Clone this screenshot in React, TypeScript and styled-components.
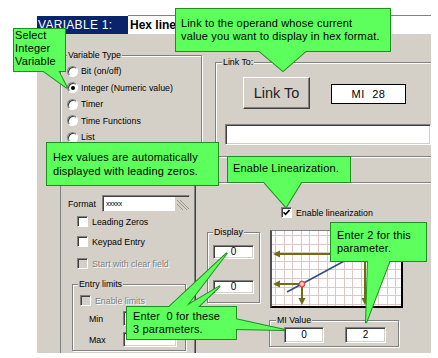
import React from 'react'
import styled, { createGlobalStyle } from 'styled-components'

const GRAY = '#d4d0c8'
const GREEN = '#5cff5c'
const GREEN_EDGE = '#1f8f1f'
const OLIVE = '#746a12'

const GlobalStyle = createGlobalStyle`
  html, body {
    margin: 0;
    padding: 0;
    background: #fff;
  }
  body {
    font-family: 'Liberation Sans', Arial, sans-serif;
  }
`

type Pt = [number, number]

interface CalloutProps {
  x: number
  y: number
  w: number
  h: number
  pad: string
  lineHeight: number
  pointers?: Pt[][]
  children: React.ReactNode
}

const Callout: React.FC<CalloutProps> = ({ x, y, w, h, pad, lineHeight, pointers = [], children }) => {
  const shapes = (
    <>
      <rect x={1} y={1} width={w - 2} height={h - 2} />
      {pointers.map((p, i) => (
        <polygon key={i} points={p.map((q) => q.join(',')).join(' ')} />
      ))}
    </>
  )
  return (
    <CalloutBox style={{ left: x, top: y, width: w, height: h }}>
      <CalloutShape width={w} height={h}>
        <g fill={GREEN_EDGE} stroke={GREEN_EDGE} strokeWidth={2} strokeLinejoin="miter">
          {shapes}
        </g>
        <g fill={GREEN} stroke="none">
          {shapes}
        </g>
      </CalloutShape>
      <CalloutText style={{ padding: pad, lineHeight: `${lineHeight}px` }}>{children}</CalloutText>
    </CalloutBox>
  )
}

const Radio: React.FC<{ checked?: boolean; label: string }> = ({ checked, label }) => (
  <OptionRow>
    <RadioCircle>{checked && <RadioDot />}</RadioCircle>
    <OptionLabel>{label}</OptionLabel>
  </OptionRow>
)

const Check: React.FC<{ checked?: boolean; disabled?: boolean; label: string; mt: number; ml: number }> = ({
  checked,
  disabled,
  label,
  mt,
  ml,
}) => (
  <CheckRow $mt={mt} $ml={ml}>
    <CheckBox $disabled={disabled}>
      {checked && (
        <svg width="7" height="7" viewBox="0 0 7 7">
          <path d="M0.5 3.2 L2.6 5.4 L6.5 1" fill="none" stroke="#000" strokeWidth="1.6" />
        </svg>
      )}
    </CheckBox>
    <OptionLabel $disabled={disabled}>{label}</OptionLabel>
  </CheckRow>
)

const GraphDrawing: React.FC = () => {
  const vs = Array.from({ length: 16 }, (_, i) => 3 + i * 8.6)
  const hs = Array.from({ length: 9 }, (_, i) => 4 + i * 8.6)
  return (
    <svg width="129" height="75" viewBox="0 0 129 75">
      <g stroke="#dcc6c6" strokeWidth="1">
        {vs.map((x) => (
          <line key={'v' + x} x1={Math.round(x) + 0.5} y1={0} x2={Math.round(x) + 0.5} y2={75} />
        ))}
        {hs.map((y) => (
          <line key={'h' + y} x1={0} y1={Math.round(y) + 0.5} x2={129} y2={Math.round(y) + 0.5} />
        ))}
      </g>
      <g stroke={OLIVE} strokeWidth="2" fill="none">
        <line x1={6} y1={23} x2={94} y2={23} />
        <line x1={93} y1={23} x2={93} y2={68} />
        <line x1={6} y1={53} x2={30} y2={53} />
        <line x1={30} y1={53} x2={30} y2={68} />
      </g>
      <g fill={OLIVE}>
        <polygon points="1,23 8,19.5 8,26.5" />
        <polygon points="1,53 8,49.5 8,56.5" />
        <polygon points="93,74 89.5,67 96.5,67" />
        <polygon points="30,74 26.5,67 33.5,67" />
      </g>
      <line x1={15} y1={61} x2={100} y2={15} stroke="#2f4f86" strokeWidth="1.6" />
      <circle cx={30} cy={53} r={3} fill="#ec7a7a" stroke="#d04848" strokeWidth="1" />
      <path d="M28 53 H32 M30 51 V55" stroke="#fff" strokeWidth="0.8" />
    </svg>
  )
}

const App: React.FC = () => {
  return (
    <Page>
      <GlobalStyle />
      <Window>
        <TitleRow>
          <TitleLabel>VARIABLE 1:</TitleLabel>
          <NameField>Hex linearization</NameField>
        </TitleRow>

        <Body>
          <LeftCol>
            <Group $w={142} $h={95} $mt={21}>
              <Legend $left={6}>Variable Type</Legend>
              <OptionList>
                <Radio label="Bit (on/off)" />
                <Radio checked label="Integer (Numeric value)" />
                <Radio label="Timer" />
                <Radio label="Time Functions" />
                <Radio label="List" />
              </OptionList>
            </Group>

            <LowerPanel>
              <FormatRow>
                <FieldLabel $w={34}>Format</FieldLabel>
                <FormatField>
                  <FormatText>xxxxx</FormatText>
                  <Grip width="14" height="14" viewBox="0 0 14 14">
                    <g stroke="#9a968e" strokeWidth="1">
                      <line x1="2" y1="3" x2="12" y2="13" />
                      <line x1="5" y1="3" x2="14" y2="12" />
                      <line x1="2" y1="7" x2="8" y2="13" />
                    </g>
                  </Grip>
                </FormatField>
              </FormatRow>
              <Check label="Leading Zeros" mt={4} ml={16} />
              <Check label="Keypad Entry" mt={9} ml={16} />
              <Check label="Start with clear field" disabled mt={11} ml={16} />

              <Group $w={114} $h={67} $mt={15} $ml={11}>
                <Legend $left={5}>Entry limits</Legend>
                <Check label="Enable limits" disabled mt={10} ml={7} />
                <LimitRow $mt={5}>
                  <FieldLabel $w={34}>Min</FieldLabel>
                  <Field $w={54} $h={15} />
                </LimitRow>
                <LimitRow $mt={6}>
                  <FieldLabel $w={34}>Max</FieldLabel>
                  <Field $w={54} $h={15} />
                </LimitRow>
              </Group>
            </LowerPanel>
          </LeftCol>

          <RightCol>
            <LinkGroup>
              <Legend $left={6}>Link To:</Legend>
              <LinkRow>
                <Button>Link To</Button>
                <OperandField>MI&nbsp;&nbsp;28</OperandField>
              </LinkRow>
              <WideField />
            </LinkGroup>

            <LinSection>
              <Check label="Enable linearization" checked mt={24} ml={76} />
              <BottomRow>
                <Group $w={53} $h={71} $mt={2} $ml={2}>
                  <Legend $left={5}>Display</Legend>
                  <Field $w={41} $h={14} $mt={12} $ml={5}>
                    0
                  </Field>
                  <Field $w={41} $h={14} $mt={21} $ml={5}>
                    0
                  </Field>
                </Group>
                <GraphCol>
                  <Graph>
                    <GraphDrawing />
                  </Graph>
                  <Group $w={130} $h={27} $mt={12} $ml={-1}>
                    <Legend $left={6}>MI Value</Legend>
                    <ValueRow>
                      <Field $w={40} $h={16}>
                        0
                      </Field>
                      <Field $w={41} $h={16} $ml={21}>
                        2
                      </Field>
                    </ValueRow>
                  </Group>
                </GraphCol>
              </BottomRow>
            </LinSection>
          </RightCol>
        </Body>
      </Window>

      <Callout x={13} y={28} w={53} h={44} pad="1px 0 0 2px" lineHeight={13} pointers={[[[29, 42], [45, 42], [54, 60]]]}>
        Select
        <br />
        Integer
        <br />
        Variable
      </Callout>

      <Callout
        x={175}
        y={8}
        w={216}
        h={44}
        pad="9px 0 0 6px"
        lineHeight={13}
        pointers={[[[83, 42], [132, 42], [108, 63]]]}
      >
        Link to the operand whose current
        <br />
        value you want to display in hex format.
      </Callout>

      <Callout x={46} y={142} w={173} h={44} pad="8px 0 0 7px" lineHeight={14}>
        Hex values are automatically
        <br />
        displayed with leading zeros.
      </Callout>

      <Callout x={227} y={156} w={124} h={27} pad="6px 0 0 6px" lineHeight={13} pointers={[[[36, 25], [75, 25], [59, 51]]]}>
        Enable Linearization.
      </Callout>

      <Callout
        x={330}
        y={222}
        w={97}
        h={40}
        pad="7px 0 0 7px"
        lineHeight={13}
        pointers={[[[38, 38], [60, 38], [36, 101]]]}
      >
        Enter 2 for this
        <br />
        parameter.
      </Callout>

      <Callout
        x={126}
        y={306}
        w={111}
        h={34}
        pad="4px 0 0 7px"
        lineHeight={13}
        pointers={[
          [[42, 2], [59, 2], [101, -53]],
          [[57, 2], [71, 2], [94, -20]],
          [[109, 13], [109, 23], [159, 24]],
        ]}
      >
        {'Enter  0 for these'}
        <br />3 parameters.
      </Callout>
    </Page>
  )
}

export default App

const Page = styled.div`
  position: relative;
  width: 438px;
  height: 358px;
  overflow: hidden;
  background: #fff;
  font-family: 'Liberation Sans', Arial, sans-serif;
  color: #000;
`

const Window = styled.div`
  margin-left: 37px;
  padding-top: 15px;
  width: 394px;
`

const TitleRow = styled.div`
  display: flex;
  height: 19px;
`

const TitleLabel = styled.div`
  box-sizing: border-box;
  width: 91px;
  margin-top: 1px;
  padding-left: 1px;
  background: #0a246a;
  color: #fff;
  font-size: 12px;
  line-height: 18px;
  letter-spacing: 0.3px;
`

const NameField = styled.div`
  flex: 1;
  padding-left: 2px;
  background: #fff;
  border-top: 1px solid #808080;
  font-size: 12px;
  font-weight: bold;
  line-height: 18px;
  white-space: nowrap;
  overflow: hidden;
`

const Body = styled.div`
  display: flex;
  height: 319px;
  background: ${GRAY};
  overflow: hidden;
`

const LeftCol = styled.div`
  box-sizing: border-box;
  width: 168px;
  padding-left: 23px;
  display: flex;
  flex-direction: column;
`

const RightCol = styled.div`
  flex: 1;
  display: flex;
  flex-direction: column;
  overflow: hidden;
`

const Group = styled.div<{ $w: number; $h: number; $mt?: number; $ml?: number }>`
  position: relative;
  box-sizing: border-box;
  flex: none;
  width: ${(p) => p.$w}px;
  height: ${(p) => p.$h}px;
  margin-top: ${(p) => p.$mt ?? 0}px;
  margin-left: ${(p) => p.$ml ?? 0}px;
  border: 1px solid #808080;
  box-shadow: 1px 1px 0 #fff, inset 1px 1px 0 #fff;
`

const Legend = styled.span<{ $left: number }>`
  position: absolute;
  top: -6px;
  left: ${(p) => p.$left}px;
  padding: 0 1px;
  background: ${GRAY};
  font-size: 8.8px;
  line-height: 10px;
  white-space: nowrap;
`

const OptionList = styled.div`
  display: flex;
  flex-direction: column;
  padding: 7px 0 0 6px;
`

const OptionRow = styled.div`
  display: flex;
  align-items: center;
  height: 16.5px;
`

const RadioCircle = styled.span`
  box-sizing: border-box;
  width: 11px;
  height: 11px;
  margin-right: 3px;
  border-radius: 50%;
  background: #fff;
  border: 1px solid;
  border-color: #808080 #fff #fff #808080;
  box-shadow: inset 1px 1px 0 #404040;
  display: flex;
  align-items: center;
  justify-content: center;
`

const RadioDot = styled.span`
  width: 4px;
  height: 4px;
  border-radius: 50%;
  background: #000;
`

const OptionLabel = styled.span<{ $disabled?: boolean }>`
  font-size: 8.8px;
  white-space: nowrap;
  color: ${(p) => (p.$disabled ? '#808080' : '#000')};
  text-shadow: ${(p) => (p.$disabled ? '1px 1px 0 #fff' : 'none')};
`

const CheckRow = styled.div<{ $mt: number; $ml: number }>`
  display: flex;
  align-items: center;
  height: 11px;
  margin-top: ${(p) => p.$mt}px;
  padding-left: ${(p) => p.$ml}px;
`

const CheckBox = styled.span<{ $disabled?: boolean }>`
  box-sizing: border-box;
  flex: none;
  width: 11px;
  height: 11px;
  margin-right: 4px;
  background: ${(p) => (p.$disabled ? GRAY : '#fff')};
  border: 1px solid;
  border-color: #808080 #fff #fff #808080;
  box-shadow: inset 1px 1px 0 #404040;
  display: flex;
  align-items: center;
  justify-content: center;
`

const LowerPanel = styled.div`
  box-sizing: border-box;
  flex: 1;
  width: 136px;
  margin-top: 5px;
  border-top: 1px solid #808080;
  border-left: 1px solid #808080;
  border-right: 1px solid #404040;
  box-shadow: inset -1px 0 0 #808080;
  display: flex;
  flex-direction: column;
`

const FormatRow = styled.div`
  display: flex;
  align-items: center;
  height: 17px;
  margin-top: 39px;
  padding-left: 7px;
`

const FieldLabel = styled.span<{ $w: number }>`
  width: ${(p) => p.$w}px;
  font-size: 8.8px;
`

const FormatField = styled.div`
  box-sizing: border-box;
  width: 88px;
  height: 17px;
  background: #fff;
  border: 1px solid;
  border-color: #808080 ${GRAY} ${GRAY} #808080;
  box-shadow: inset 1px 1px 0 #404040;
  display: flex;
  align-items: center;
  justify-content: space-between;
`

const FormatText = styled.span`
  padding-left: 3px;
  font-size: 7px;
  letter-spacing: -0.3px;
`

const Grip = styled.svg`
  align-self: flex-end;
  background: ${GRAY};
`

const LimitRow = styled.div<{ $mt: number }>`
  display: flex;
  align-items: center;
  margin-top: ${(p) => p.$mt}px;
  padding-left: 16px;
`

const Field = styled.div<{ $w: number; $h: number; $mt?: number; $ml?: number }>`
  box-sizing: border-box;
  flex: none;
  width: ${(p) => p.$w}px;
  height: ${(p) => p.$h}px;
  margin-top: ${(p) => p.$mt ?? 0}px;
  margin-left: ${(p) => p.$ml ?? 0}px;
  background: #fff;
  border: 1px solid;
  border-color: #808080 #fff #fff #808080;
  box-shadow: inset 1px 1px 0 #404040, inset -1px -1px 0 ${GRAY};
  font-size: 10px;
  line-height: ${(p) => p.$h - 2}px;
  text-align: center;
`

const LinkGroup = styled.div`
  position: relative;
  box-sizing: border-box;
  flex: none;
  width: 240px;
  height: 95px;
  margin-top: 28px;
  margin-left: 10px;
  border: 1px solid #808080;
  box-shadow: 1px 1px 0 #fff, inset 1px 1px 0 #fff;
`

const LinkRow = styled.div`
  display: flex;
  align-items: flex-start;
  padding: 14px 0 0 27px;
`

const Button = styled.div`
  box-sizing: border-box;
  width: 67px;
  height: 32px;
  background: ${GRAY};
  border: 1px solid;
  border-color: #fff #404040 #404040 #fff;
  box-shadow: inset -1px -1px 0 #808080;
  font-size: 14.5px;
  line-height: 30px;
  text-align: center;
  color: #222;
`

const OperandField = styled.div`
  box-sizing: border-box;
  width: 75px;
  height: 20px;
  margin: 7px 0 0 21px;
  background: #fff;
  border: 1px solid #000;
  font-size: 11px;
  line-height: 18px;
  text-align: center;
  letter-spacing: 0.6px;
`

const WideField = styled.div`
  box-sizing: border-box;
  width: 206px;
  height: 21px;
  margin: 15px 0 0 9px;
  background: #fff;
  border: 1px solid;
  border-color: #808080 #fff #fff #808080;
  box-shadow: inset 1px 1px 0 #404040, inset -1px -1px 0 ${GRAY};
`

const LinSection = styled.div`
  flex: 1;
  margin-top: 25px;
  border-top: 1px solid #808080;
  box-shadow: inset 0 1px 0 #fff;
  display: flex;
  flex-direction: column;
`

const BottomRow = styled.div`
  display: flex;
  align-items: flex-start;
  margin-top: 12px;
`

const GraphCol = styled.div`
  display: flex;
  flex-direction: column;
  margin-left: 10px;
`

const Graph = styled.div`
  box-sizing: border-box;
  width: 133px;
  height: 78px;
  background: #fff;
  border-top: 1px solid #808080;
  border-left: 2px solid #505050;
  border-right: 2px solid #000;
  border-bottom: 2px solid #000;
  display: flex;
`

const ValueRow = styled.div`
  display: flex;
  padding: 6px 0 0 14px;
`

const CalloutBox = styled.div`
  position: absolute;
  box-sizing: border-box;
`

const CalloutShape = styled.svg`
  position: absolute;
  left: 0;
  top: 0;
  overflow: visible;
`

const CalloutText = styled.div`
  position: relative;
  font-size: 11px;
  letter-spacing: 0.15px;
  white-space: pre;
  color: #000;
`
